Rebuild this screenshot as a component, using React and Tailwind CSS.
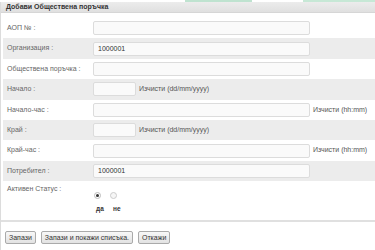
import { useState } from 'react'

const rows = [
  { label: 'АОП № :', kind: 'wide' },
  { label: 'Организация :', kind: 'wide', value: '1000001' },
  { label: 'Обществена поръчка :', kind: 'wide' },
  { label: 'Начало :', kind: 'date' },
  { label: 'Начало-час :', kind: 'time' },
  { label: 'Край :', kind: 'date' },
  { label: 'Край-час :', kind: 'time' },
  { label: 'Потребител :', kind: 'wide', value: '1000001' },
]

function Field({ kind, value }) {
  const input = (w) => (
    <input
      defaultValue={value || ''}
      className={`${w} h-[14px] rounded-[2px] border border-[#dcdcdc] bg-[#fafafa] px-[4px] text-[7px] text-[#333] outline-none`}
    />
  )
  if (kind === 'date') {
    return (
      <div className="flex items-center gap-[3px]">
        {input('w-[43px]')}
        <span className="text-[#555]">Изчисти (dd/mm/yyyy)</span>
      </div>
    )
  }
  if (kind === 'time') {
    return (
      <div className="flex items-center gap-[3px]">
        {input('w-[217px]')}
        <span className="text-[#555]">Изчисти (hh:mm)</span>
      </div>
    )
  }
  return input('w-[217px]')
}

export default function App() {
  const [active, setActive] = useState(true)

  return (
    <div className="w-[375px] h-[250px] overflow-hidden bg-white text-[7px] text-[#666] font-['Liberation_Sans',Arial,sans-serif]">
      {/* top strip left over from the page banner */}
      <div className="flex h-[2px]">
        <div className="w-[185px] bg-white" />
        <div className="w-[67px] bg-[#bfe3d0]" />
        <div className="w-[51px] bg-white" />
        <div className="flex-1 bg-[#c7e8d6]" />
      </div>

      <div className="border-l border-[#dcdcdc] h-full">
        {/* ── Header ───────────────────── */}
        <div className="h-[11px] flex items-center pl-[5px] bg-gradient-to-b from-[#ececec] to-[#e0e0e0] border-b border-[#d6d6d6] font-bold text-[#333]">
          Добави Обществена поръчка
        </div>

        <div className="pt-[5px] pl-[2px]">
          {rows.map((r, i) => (
            <div
              key={r.label}
              className={`flex items-center h-[20.4px] ${i % 2 === 1 ? 'bg-[#ececec]' : 'bg-white'}`}
            >
              <div className="w-[90px] pl-[4px]">{r.label}</div>
              <Field kind={r.kind} value={r.value} />
            </div>
          ))}

          {/* ── Status row ─────────────── */}
          <div className="flex h-[39px] pt-[3px]">
            <div className="w-[90px] pl-[4px]">Активен Статус :</div>
            <div className="pt-[8px] pl-[1px]">
              <div className="flex gap-[9px]">
                <button
                  onClick={() => setActive(true)}
                  className="w-[7px] h-[7px] rounded-full border border-[#bbb] bg-white flex items-center justify-center"
                >
                  {active && <span className="w-[3px] h-[3px] rounded-full bg-[#333]" />}
                </button>
                <button
                  onClick={() => setActive(false)}
                  className="w-[7px] h-[7px] rounded-full border border-[#ccc] bg-[#f6f6f6] flex items-center justify-center"
                >
                  {!active && <span className="w-[3px] h-[3px] rounded-full bg-[#333]" />}
                </button>
              </div>
              <div className="flex gap-[8px] mt-[5px] pl-[2px] font-bold text-[6.5px] text-[#333]">
                <span className="w-[9px]">да</span>
                <span>не</span>
              </div>
            </div>
          </div>
        </div>

        <div className="h-[2px] bg-[#e0e0e0]" />

        {/* ── Actions ───────────────────── */}
        <div className="flex gap-[5px] pl-[4px] pt-[9px] text-[#333]">
          {['Запази', 'Запази и покажи списъка.', 'Откажи'].map((b) => (
            <button
              key={b}
              className="h-[13px] px-[3px] border border-[#aaa] rounded-[2px] bg-gradient-to-b from-[#f8f8f8] to-[#e2e2e2] text-[7px] leading-none"
            >
              {b}
            </button>
          ))}
        </div>
      </div>
    </div>
  )
}
